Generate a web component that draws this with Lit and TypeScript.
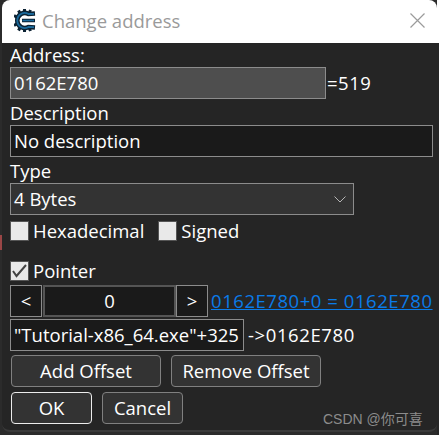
import { LitElement, html, css } from "lit";
import { customElement } from "lit/decorators.js";

@customElement("app-root")
export class AppRoot extends LitElement {
  static styles = css`
    :host {
      display: block;
      width: 439px;
      height: 435px;
      overflow: hidden;
      position: relative;
      background: linear-gradient(#fff 43px, #252525 43px) right / 2px 100% no-repeat, #2b2b2b;
      font-family: "Open Sans", "Noto Sans", sans-serif;
      font-size: 18.5px;
      line-height: 24px;
      color: #fff;
    }
    .window {
      margin-left: 2px;
      box-sizing: border-box;
      width: 435px;
      height: 432px;
      border-radius: 8px;
      border-bottom: 2px solid #3a3a3a;
      overflow: hidden;
      background: #252525;
      display: flex;
      flex-direction: column;
    }
    .title {
      box-sizing: border-box;
      height: 43px;
      background: #fff;
      display: flex;
      align-items: center;
      padding: 0 12px 2px 12px;
      flex: none;
    }
    .title-text {
      margin-left: 6px;
      color: #9a9a9a;
    }
    .close {
      margin-left: auto;
      display: block;
    }
    .content {
      padding: 0 0 0 8px;
      display: flex;
      flex-direction: column;
    }
    .label {
      padding-top: 2px;
      height: 24px;
    }
    .label.first { padding-top: 0; }
    .row {
      display: flex;
      align-items: center;
    }
    .field {
      box-sizing: border-box;
      height: 32px;
      border: 1px solid #8c8c8c;
      padding: 0 3px;
      display: flex;
      align-items: center;
      white-space: nowrap;
      overflow: hidden;
    }
    .addr { width: 316px; background: #4e4e4e; }
    .desc { width: 423px; background: #1a1a1a; }
    .type {
      width: 344px;
      background: #333;
      justify-content: space-between;
      padding-right: 7px;
    }
    .num { letter-spacing: 0.5px; }
    .after { margin-left: 1px; }
    .checks { height: 20px; margin-top: 6px; }
    .box {
      box-sizing: border-box;
      width: 19px;
      height: 20px;
      background: #e9e9e9;
      border: 1px solid #555;
      margin-right: 4px;
      flex: none;
    }
    .box svg { display: block; }
    .second { margin-left: 14px; }
    .pointer { margin-top: 20px; }
    .nav { margin-top: 4px; }
    .step {
      box-sizing: border-box;
      width: 32px;
      height: 32px;
      background: #1a1a1a;
      border: 1px solid #8c8c8c;
      display: flex;
      align-items: center;
      justify-content: center;
    }
    .offset {
      width: 133px;
      margin-left: 1px;
      justify-content: center;
      background: #1a1a1a;
      border-width: 2px;
      border-color: #555;
    }
    .link {
      margin-left: 3px;
      color: #0a7be8;
      text-decoration: underline;
      white-space: nowrap;
      letter-spacing: 0.55px;
    }
    .base { margin-top: 2px; }
    .module { width: 234px; background: #1a1a1a; }
    .arrow { margin-left: 4px; letter-spacing: 0.6px; }
    .buttons { margin-top: 4px; margin-left: 1px; }
    .buttons.last { margin-top: 5px; }
    .btn {
      box-sizing: border-box;
      height: 32px;
      background: #333;
      border: 1px solid #808080;
      border-radius: 4px;
      display: flex;
      align-items: center;
      justify-content: center;
    }
    .wide { width: 150px; }
    .narrow { width: 81px; }
    .gap { margin-left: 10px; }
    .default { border-color: #ececec; }
    .mark {
      position: absolute;
      left: 323px;
      top: 407px;
      font-family: "Liberation Sans", "Noto Sans CJK SC", sans-serif;
      font-size: 14px;
      color: #8c8c8c;
      white-space: nowrap;
    }
    .behind {
      position: absolute;
      left: 0;
      top: 235px;
      width: 2px;
      height: 15px;
      background: #9a4646;
    }
  `;

  render() {
    return html`
      <div class="window">
        <div class="title">
          <svg width="22" height="23" viewBox="0 0 22 23">
            <path d="M10.500 0v4M4.500 1.500l2 3.500M0 6.500l3.500 2M0 16.500l3.500-2M4.500 21.500l2-3.500M10.500 23v-4M16.500 1l-1.500 3.500M16.500 22l-1.500-3.500" stroke="#0c2233" stroke-width="3" fill="none"></path>
            <path d="M21 4.500L14.500 5A7.500 7.500 0 1 0 14.500 18L21 18.500" fill="none" stroke="#0c2233" stroke-width="4.600"></path>
            <path d="M20 4.800L14.500 5A7.500 7.500 0 1 0 14.500 18L20 18.200" fill="none" stroke="#1a6a9c" stroke-width="1.800"></path>
            <path d="M8 11.500H21" fill="none" stroke="#0c2233" stroke-width="3.600"></path>
            <path d="M8.500 11.500H20" fill="none" stroke="#1a6a9c" stroke-width="1.400"></path>
          </svg>
          <span class="title-text">Change address</span>
          <svg class="close" width="15" height="15" viewBox="0 0 15 15">
            <path d="M.5.5l14 14M14.500.5l-14 14" stroke="#9b9b9b" stroke-width="1.200" fill="none"></path>
          </svg>
        </div>
        <div class="content">
          <div class="label first">Address:</div>
          <div class="row">
            <div class="field addr">0162E780</div>
            <span class="after num">=519</span>
          </div>
          <div class="label">Description</div>
          <div class="field desc">No description</div>
          <div class="label">Type</div>
          <div class="field type">
            <span>4 Bytes</span>
            <svg width="12" height="7" viewBox="0 0 12 7"><path d="M.5.500L6 6l5.500-5.500" fill="none" stroke="#b5b5b5"></path></svg>
          </div>
          <div class="row checks">
            <span class="box"></span><span>Hexadecimal</span>
            <span class="box second"></span><span>Signed</span>
          </div>
          <div class="row checks pointer">
            <span class="box">
              <svg width="17" height="18" viewBox="0 0 17 18"><path d="M2 9l3.500 5L15 3" fill="none" stroke="#444" stroke-width="2"></path></svg>
            </span><span>Pointer</span>
          </div>
          <div class="row nav">
            <div class="step">&lt;</div>
            <div class="field offset">0</div>
            <div class="step">&gt;</div>
            <span class="link">0162E780+0 = 0162E780</span>
          </div>
          <div class="row base">
            <div class="field module">"Tutorial-x86_64.exe"+325</div>
            <span class="arrow">-&gt;0162E780</span>
          </div>
          <div class="row buttons">
            <div class="btn wide">Add Offset</div>
            <div class="btn wide gap">Remove Offset</div>
          </div>
          <div class="row buttons last">
            <div class="btn narrow default">OK</div>
            <div class="btn narrow gap">Cancel</div>
          </div>
        </div>
      </div>
      <div class="behind"></div>
      <div class="mark">CSDN @你可喜</div>
    `;
  }
}
